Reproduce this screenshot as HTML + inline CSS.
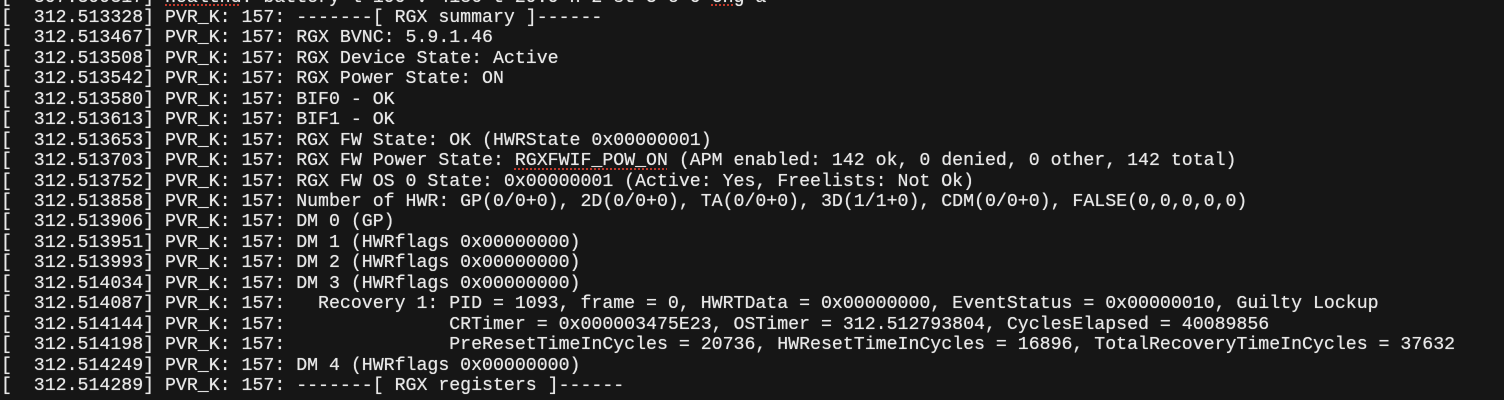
<!DOCTYPE html>
<html><head><meta charset="utf-8"><style>
html,body{margin:0;padding:0;background:#161616;width:1504px;height:400px;overflow:hidden}
pre{position:absolute;left:1px;top:-12.5px;margin:0;font-family:"Liberation Mono",monospace;font-size:18.23px;line-height:20.45px;color:#e8e8e8;white-space:pre;text-shadow:0 0 0.6px #e8e8e8}
.u{text-decoration:underline dotted #c0392b;text-decoration-thickness:2px;text-underline-offset:3px}
</style></head><body><pre>[  307.399317] <span class="u">healthd</span>: battery l=100 v=4186 t=29.0 h=2 st=5 c=0 <span class="u">chg</span>=a
[  312.513328] PVR_K: 157: -------[ RGX summary ]------
[  312.513467] PVR_K: 157: RGX BVNC: 5.9.1.46
[  312.513508] PVR_K: 157: RGX Device State: Active
[  312.513542] PVR_K: 157: RGX Power State: ON
[  312.513580] PVR_K: 157: BIF0 - OK
[  312.513613] PVR_K: 157: BIF1 - OK
[  312.513653] PVR_K: 157: RGX FW State: OK (HWRState 0x00000001)
[  312.513703] PVR_K: 157: RGX FW Power State: <span class="u">RGXFWIF_POW_ON</span> (APM enabled: 142 ok, 0 denied, 0 other, 142 total)
[  312.513752] PVR_K: 157: RGX FW OS 0 State: 0x00000001 (Active: Yes, Freelists: Not Ok)
[  312.513858] PVR_K: 157: Number of HWR: GP(0/0+0), 2D(0/0+0), TA(0/0+0), 3D(1/1+0), CDM(0/0+0), FALSE(0,0,0,0,0)
[  312.513906] PVR_K: 157: DM 0 (GP)
[  312.513951] PVR_K: 157: DM 1 (HWRflags 0x00000000)
[  312.513993] PVR_K: 157: DM 2 (HWRflags 0x00000000)
[  312.514034] PVR_K: 157: DM 3 (HWRflags 0x00000000)
[  312.514087] PVR_K: 157:   Recovery 1: PID = 1093, frame = 0, HWRTData = 0x00000000, EventStatus = 0x00000010, Guilty Lockup
[  312.514144] PVR_K: 157:               CRTimer = 0x000003475E23, OSTimer = 312.512793804, CyclesElapsed = 40089856
[  312.514198] PVR_K: 157:               PreResetTimeInCycles = 20736, HWResetTimeInCycles = 16896, TotalRecoveryTimeInCycles = 37632
[  312.514249] PVR_K: 157: DM 4 (HWRflags 0x00000000)
[  312.514289] PVR_K: 157: -------[ RGX registers ]------
</pre></body></html>
